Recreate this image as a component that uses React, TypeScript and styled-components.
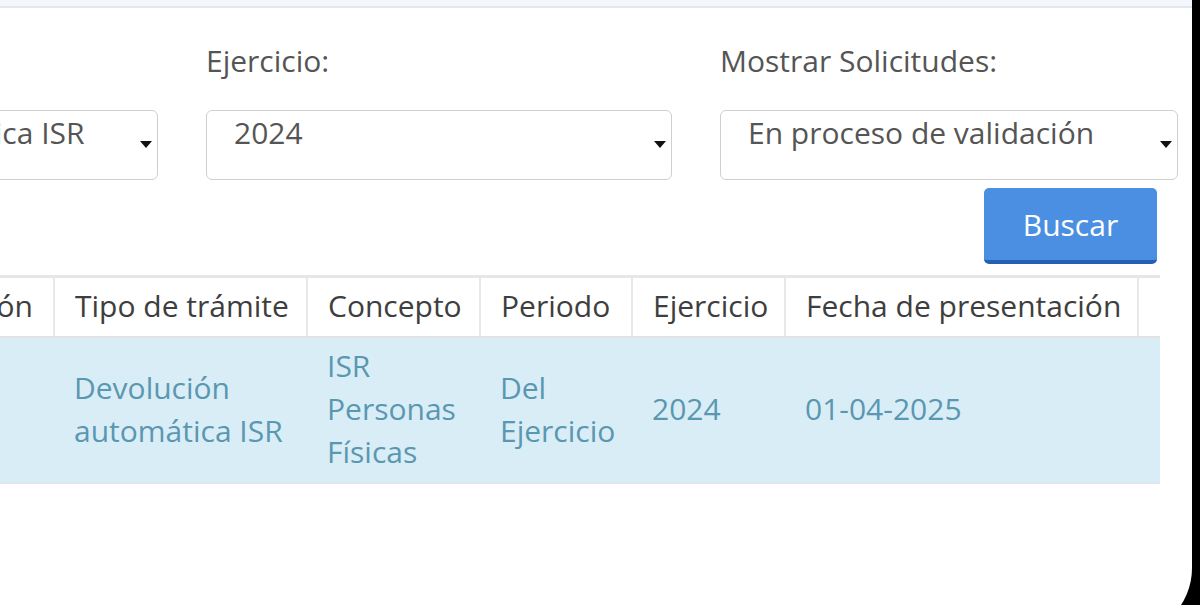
import React from "react";
import styled, { createGlobalStyle } from "styled-components";

const GlobalStyle = createGlobalStyle`
  html, body {
    margin: 0;
    padding: 0;
    background: #000;
  }
  body {
    font-family: "Open Sans", "Noto Sans", "Liberation Sans", sans-serif;
  }
`;

const Frame = styled.div`
  height: 605px;
  width: 1200px;
  overflow: hidden;
  background: #000;
  display: flex;
`;

const Screen = styled.div`
  flex: none;
  width: 1192px;
  height: 636px;
  background: #fff;
  border-bottom-right-radius: 68px;
  overflow: hidden;
`;

const TopStrip = styled.div`
  height: 6px;
  background: #f4f8fc;
  border-bottom: 2px solid #e2e8ee;
`;

const Content = styled.div`
  margin-left: -316px;
  width: 1494px;
`;

const FilterGrid = styled.div`
  display: grid;
  grid-template-columns: 474px 466px 458px;
  column-gap: 48px;
  padding-top: 31px;
`;

const Field = styled.div`
  display: flex;
  flex-direction: column;
`;

const Label = styled.label`
  font-size: 30px;
  line-height: 43px;
  color: #555;
  margin-bottom: 28px;
  white-space: nowrap;
`;

const SelectBox = styled.div`
  position: relative;
  box-sizing: border-box;
  height: 70px;
  border: 1px solid #cfcfcf;
  border-radius: 6px;
  padding: 0 40px 0 27px;
  font-size: 30px;
  line-height: 43px;
  color: #555;
  white-space: nowrap;
  overflow: hidden;
  background: #fff;
`;

const Caret = styled.span`
  position: absolute;
  right: 5px;
  top: 30px;
  width: 0;
  height: 0;
  border-left: 6px solid transparent;
  border-right: 6px solid transparent;
  border-top: 7px solid #111;
`;

const ButtonRow = styled.div`
  display: flex;
  justify-content: flex-end;
  margin-top: 8px;
  padding-right: 21px;
`;

const SearchButton = styled.button`
  box-sizing: border-box;
  width: 173px;
  height: 76px;
  background: #4a8fe1;
  border: none;
  border-bottom: 4px solid #2461b4;
  border-radius: 5px;
  color: #fff;
  font-family: inherit;
  font-size: 30px;
  line-height: 43px;
  padding: 0;
  cursor: pointer;
`;

const TableWrap = styled.div`
  display: flex;
  justify-content: flex-end;
  margin-top: 11px;
  padding-right: 18px;
`;

const Table = styled.table`
  flex: none;
  border-collapse: collapse;
  table-layout: fixed;
  width: 1486px;
  border-top: 3px solid #e6e6e6;
  font-size: 30px;
  line-height: 43px;
`;

const Col = styled.col<{ $w: number }>`
  width: ${(p) => p.$w}px;
`;

const Th = styled.th<{ $end?: boolean }>`
  padding: 6px 20px 9px;
  text-align: ${(p) => (p.$end ? "right" : "left")};
  font-weight: 400;
  color: #3e3e3e;
  white-space: nowrap;
  overflow: hidden;
  border-bottom: 2px solid #e3e3e3;
  & + & {
    border-left: 2px solid #e8e8e8;
  }
`;

const Row = styled.tr`
  background: #d9edf7;
`;

const Td = styled.td`
  padding: 6px 20px 9px;
  vertical-align: middle;
  color: #5a97b1;
  border-bottom: 2px solid #e0e8ed;
`;

const columns = [380, 253, 173, 152, 153, 353, 22];

export default function App() {
  return (
    <>
      <GlobalStyle />
      <Frame>
        <Screen>
          <TopStrip />
          <Content>
            <FilterGrid>
              <Field>
                <Label>Tipo de trámite:</Label>
                <SelectBox>
                  Devolución automática ISR
                  <Caret />
                </SelectBox>
              </Field>
              <Field>
                <Label>Ejercicio:</Label>
                <SelectBox>
                  2024
                  <Caret />
                </SelectBox>
              </Field>
              <Field>
                <Label>Mostrar Solicitudes:</Label>
                <SelectBox>
                  En proceso de validación
                  <Caret />
                </SelectBox>
              </Field>
            </FilterGrid>
            <ButtonRow>
              <SearchButton type="button">Buscar</SearchButton>
            </ButtonRow>
            <TableWrap>
              <Table>
                <colgroup>
                  {columns.map((w, i) => (
                    <Col key={i} $w={w} />
                  ))}
                </colgroup>
                <thead>
                  <tr>
                    <Th $end>Número de operación</Th>
                    <Th>Tipo de trámite</Th>
                    <Th>Concepto</Th>
                    <Th>Periodo</Th>
                    <Th>Ejercicio</Th>
                    <Th>Fecha de presentación</Th>
                    <Th />
                  </tr>
                </thead>
                <tbody>
                  <Row>
                    <Td />
                    <Td>Devolución automática ISR</Td>
                    <Td>ISR Personas Físicas</Td>
                    <Td>Del Ejercicio</Td>
                    <Td>2024</Td>
                    <Td>01-04-2025</Td>
                    <Td />
                  </Row>
                </tbody>
              </Table>
            </TableWrap>
          </Content>
        </Screen>
      </Frame>
    </>
  );
}
